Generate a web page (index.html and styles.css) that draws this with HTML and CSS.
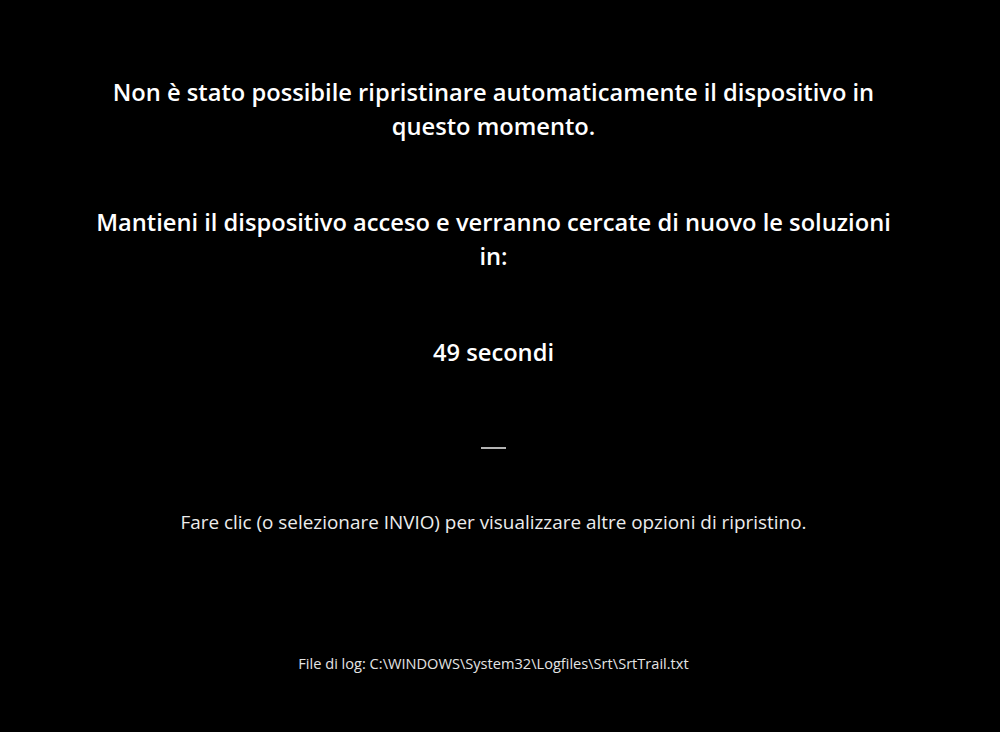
FILE: index.html
```html
<!DOCTYPE html>
<html lang="it">
<head>
<meta charset="utf-8">
<title>Ripristino automatico</title>
<link rel="stylesheet" href="styles.css">
</head>
<body>
<main class="screen">
  <p class="heading first">Non è stato possibile ripristinare automaticamente il dispositivo in questo momento.</p>
  <p class="heading second">Mantieni il dispositivo acceso e verranno cercate di nuovo le soluzioni in:</p>
  <p class="heading countdown">49 secondi</p>
  <div class="dash"></div>
  <p class="hint">Fare clic (o selezionare INVIO) per visualizzare altre opzioni di ripristino.</p>
  <p class="log">File di log: C:\WINDOWS\System32\Logfiles\Srt\SrtTrail.txt</p>
</main>
</body>
</html>
```
FILE: styles.css
```css
html, body {
  margin: 0;
  padding: 0;
  background: #000;
  height: 100%;
}
body {
  padding-right: 13px;
  box-sizing: border-box;
}
.screen {
  width: 815px;
  margin: 0 auto;
  display: flex;
  flex-direction: column;
  align-items: center;
  text-align: center;
  color: #fff;
  font-family: "Open Sans", "Noto Sans", sans-serif;
  padding-top: 75px;
}
.heading {
  margin: 0;
  font-size: 23.7px;
  font-weight: 600;
  line-height: 34px;
}
.first { margin-top: 0; }
.second { margin-top: 62px; }
.countdown { margin-top: 62px; }
.dash {
  width: 25px;
  height: 2px;
  background: #b4b4b4;
  margin-top: 78px;
}
.hint {
  margin: 61px 0 0;
  font-size: 18.9px;
  font-weight: 400;
  line-height: 24px;
  color: #ececec;
}
.log {
  margin: 119px 0 0;
  font-size: 14.6px;
  line-height: 20px;
  color: #e4e4e4;
}
```
